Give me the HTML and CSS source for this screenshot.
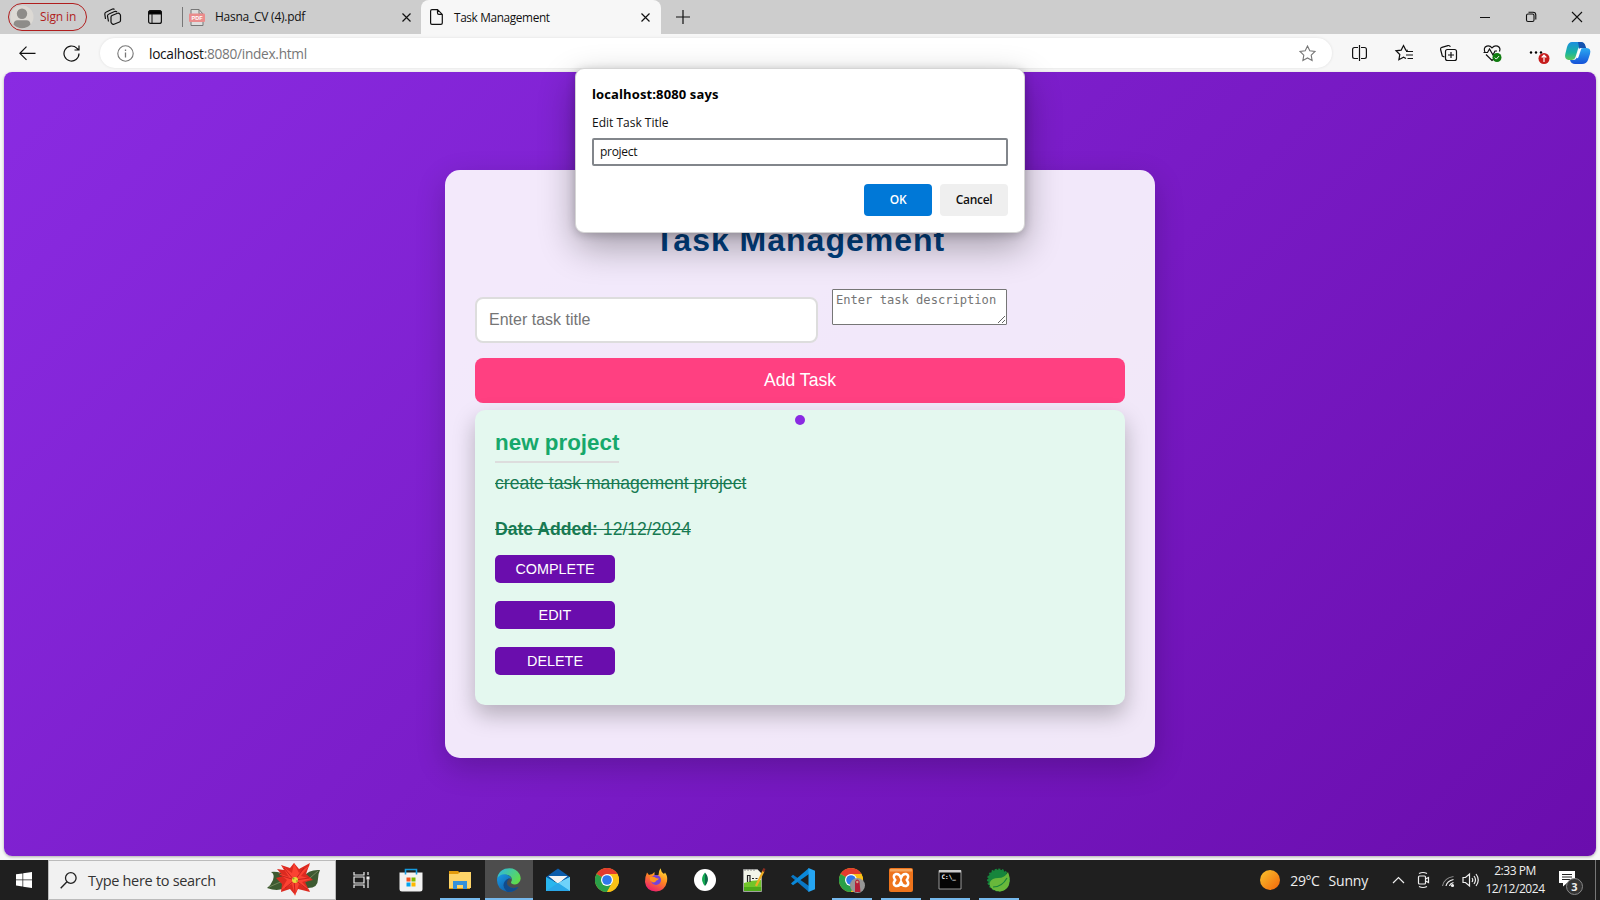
FILE: index.html
```html
<!DOCTYPE html>
<html lang="en">
<head>
<meta charset="utf-8">
<title>Task Management</title>
<link rel="stylesheet" href="styles.css">
</head>
<body>
<svg width="0" height="0" class="defs">
  <defs>
    <linearGradient id="edgeBlue" x1="0" y1="0" x2="1" y2="1"><stop offset="0" stop-color="#1a9be6"/><stop offset="1" stop-color="#0c4a94"/></linearGradient>
    <linearGradient id="edgeGreen" x1="0" y1="0" x2="1" y2=".6"><stop offset="0" stop-color="#2bb5ea"/><stop offset="1" stop-color="#5fdc4c"/></linearGradient>
    <linearGradient id="fox" x1=".8" y1="0" x2=".3" y2="1"><stop offset="0" stop-color="#ffe43b"/><stop offset=".45" stop-color="#ff8a1f"/><stop offset="1" stop-color="#ed1b70"/></linearGradient>
    <linearGradient id="sun" x1="0" y1="0" x2="1" y2="1"><stop offset="0" stop-color="#f9c42d"/><stop offset="1" stop-color="#f3650a"/></linearGradient>
    <linearGradient id="pilotL" x1="0" y1="0" x2="0" y2="1"><stop offset="0" stop-color="#1c8fe0"/><stop offset=".6" stop-color="#19b59f"/><stop offset="1" stop-color="#5cc85a"/></linearGradient>
    <linearGradient id="pilotR" x1="0" y1="0" x2="0" y2="1"><stop offset="0" stop-color="#2aa9f2"/><stop offset="1" stop-color="#1652d8"/></linearGradient>
    <g id="chrome">
      <circle cx="12" cy="12" r="12" fill="#fbc116"/>
      <path d="M12 12 1.6 6A12 12 0 0 1 22.4 6Z" fill="#e33b2e"/>
      <path d="M1.6 6A12 12 0 0 0 12 24l5-9-5-3Z" fill="#2a9f48"/>
      <path d="M12 6h10.4A12 12 0 0 1 12 24l5.2-9Z" fill="#fbc116"/>
      <circle cx="12" cy="12" r="6" fill="#fff"/><circle cx="12" cy="12" r="4.8" fill="#2f78ec"/>
    </g>
  </defs>
</svg>
<div class="screen">
  <header class="tabs">
    <div class="signin">
      <svg width="24" height="24" viewBox="0 0 24 24"><circle cx="12" cy="12" r="11.5" fill="#dcd9d4"/><circle cx="12" cy="8.7" r="5.2" fill="#8e8c89"/><path d="M3.5 19.5q.5-4.200 4-4.200h9q3.500 0 4 4.200A11.500 11.500 0 0 1 3.500 19.500Z" fill="#8e8c89"/></svg>
      <span class="t-sign">Sign in</span>
    </div>
    <svg class="i-work" width="18" height="18" viewBox="0 0 18 18"><path d="M1.500 11 .8 6q0-1.500 1.500-2L8 1.200q1.500-.6 2.500.3M4.500 13.500 3.500 8q0-1.500 1.500-2l5.500-2.500q1.500-.5 2.500.5M7 9q0-1 1-1.500l5.500-2.200q1.300-.5 2.200.5.800.8.800 1.700v5q0 1-1 1.500L10 16.200q-1.200.5-2.100-.500Q7 14.800 7 14Z" fill="none" stroke="#111" stroke-width="1.200"/></svg>
    <svg class="i-vert" width="14" height="14" viewBox="0 0 14 14"><rect x=".6" y=".6" width="12.800" height="12.800" rx="2" fill="none" stroke="#111" stroke-width="1.200"/><path d="M1 1h12v3H1zM4 4v9" stroke="#111"/></svg>
    <div class="sep"></div>
    <div class="tab">
      <svg width="16" height="17" viewBox="0 0 16 17"><path d="M2 .500h8L14 5v11.500H2Z" fill="#ddd" stroke="#777"/><path d="M10 .500V5h4" fill="none" stroke="#777"/><rect x="0" y="4.500" width="16" height="8.500" rx="1" fill="#ea8c8c"/><text x="8" y="11" text-anchor="middle" class="pdf">PDF</text></svg>
      <span class="t-cv">Hasna_CV (4).pdf</span>
      <svg class="x" width="9" height="9" viewBox="0 0 9 9"><path d="m.5.5 8 8m0-8-8 8" stroke="#111" stroke-width="1.200"/></svg>
    </div>
    <div class="tab active">
      <svg width="13" height="16" viewBox="0 0 13 16"><path d="M2 .6h5.500l4.800 4.800V14q0 1.400-1.400 1.400H2Q.6 15.400.6 14V2Q.6.600 2 .600ZM7.500.6V4q0 1.400 1.400 1.400h3.400" fill="none" stroke="#111" stroke-width="1.200"/></svg>
      <span class="t-task">Task Management</span>
      <svg class="x" width="9" height="9" viewBox="0 0 9 9"><path d="m.5.5 8 8m0-8-8 8" stroke="#111" stroke-width="1.200"/></svg>
    </div>
    <svg class="plus" width="14" height="14" viewBox="0 0 14 14"><path d="M7 0v14M0 7h14" stroke="#111" stroke-width="1.200"/></svg>
    <svg class="win" width="104" height="12" viewBox="0 0 104 12"><path d="M0 6.500h10" stroke="#111"/><g fill="none" stroke="#111" stroke-width="1.100"><rect x="46.500" y="3" width="7.500" height="7.500" rx="1.500"/><path d="M48.500 1.200h4.500q2.800 0 2.800 2.800v4.500"/><path d="m92 1 10 10m0-10-10 10"/></g></svg>
  </header>
  <div class="toolbar">
    <svg class="back" width="17" height="15" viewBox="0 0 17 15"><path d="M7.500.700.900 7.300l6.600 6.600M1 7.300h15.500" fill="none" stroke="#111" stroke-width="1.200"/></svg>
    <svg class="reload" width="17" height="17" viewBox="0 0 17 17"><path d="M16 8.500A7.500 7.500 0 1 1 13.800 3.200L16 5M16 .500V5h-4.500" fill="none" stroke="#111" stroke-width="1.200"/></svg>
    <div class="address">
      <svg width="17" height="17" viewBox="0 0 17 17"><circle cx="8.500" cy="8.500" r="7.700" fill="none" stroke="#777" stroke-width="1.100"/><path d="M8.500 7.500v5M8.500 4.500v1.500" stroke="#777" stroke-width="1.300"/></svg>
      <span class="t-url"><b>localhost</b>:8080/index.html</span>
      <svg class="star" width="17" height="17" viewBox="0 0 17 17"><path d="m8.500 1 2.300 4.800 5.200.700-3.800 3.700.9 5.200-4.600-2.500-4.600 2.500.9-5.200L1 6.500l5.200-.7Z" fill="none" stroke="#777" stroke-width="1.100"/></svg>
    </div>
    <svg class="tools" width="244" height="28" viewBox="0 0 244 28">
      <g fill="none" stroke="#111" stroke-width="1.200">
        <path d="M6 7.500H2.500Q.6 7.500.6 9.400v7.200q0 1.900 1.900 1.900H6M9 7.500h3.500q1.900 0 1.900 1.900v7.200q0 1.900-1.900 1.900H9M7.500 5v16"/>
        <path d="M54 18.500l-2.500-1.300-4.600 2.500.9-5.200L44 10.800l5.200-.7L51.500 5.500l2.300 4.600 2 .3M54 11.500h7M54 15h7M55.500 18.500h5.500"/>
        <path d="M92.500 17l-2.200-1-1.700-6.500q-.3-1.700 1.300-2.200l6-1.700q1.900-.5 2.400 1.300"/><rect x="93.500" y="9.500" width="11" height="11" rx="2"/><path d="M99 12v6M96 15h6"/>
        <path d="M143 18l-3 2.500-6-6M133 12.500q-2-5 1.800-6.400 3-1 5.200 1.700 2.400-2.700 5.500-1.700 3.500 1.500 2 5.400M131.500 12.500h4l2-3.500 3.500 6 2-4h2"/>
      </g>
      <circle cx="145" cy="17.500" r="4.500" fill="#107c10"/><path d="m142.800 17.600 1.500 1.500 2.700-3" fill="none" stroke="#fff"/>
      <circle cx="179" cy="12.500" r="1.200"/><circle cx="184" cy="12.500" r="1.200"/><circle cx="189" cy="12.500" r="1.200"/>
      <circle cx="192" cy="18.500" r="5.500" fill="#c61c1c"/><path d="M192 22v-6.500m-2.300 2 2.300-2.300 2.300 2.300" fill="none" stroke="#fff" stroke-width="1.200"/>
      <path d="M220 2h8q4 0 5 4h-4q-2 0-3 3l-2.500 8q-1 3-4 3h-3q-4.500-1-3.200-6L215 7q1.500-5 5-5Z" fill="url(#pilotL)"/>
      <path d="M226 2h3q3.500 0 4.500 4l.8 2.500-3.800-.5q-2 0-3 2Z" fill="#1553b0"/>
      <path d="M230 24h-7q-4 0-5-4h3.500q2.500 0 3.500-3l2.500-6q1-3 4-3h3q5 0 3.500 6l-2 6q-1.500 4-6 4Z" fill="url(#pilotR)"/>
      <path d="m224.300 17.500 2.800-8.500q.6-1 2.400-1l-3 9q-.7 2-2.200.500Z" fill="#fff"/>
    </svg>
  </div>
  <main class="viewport">
    <section class="card">
      <h1><span>T</span>ask Management</h1>
      <div class="fields">
        <input class="title" type="text" placeholder="Enter task title">
        <textarea class="desc" placeholder="Enter task description"></textarea>
      </div>
      <button class="add">Add Task</button>
      <article class="task">
        <span class="dot"></span>
        <h3>new project</h3>
        <p class="what">create task management project</p>
        <p class="date"><strong>Date Added:</strong> 12/12/2024</p>
        <div class="actions"><button>COMPLETE</button><button>EDIT</button><button>DELETE</button></div>
      </article>
    </section>
  </main>
  <footer class="taskbar">
    <div class="start"><svg width="16" height="16" viewBox="0 0 16 16"><path d="M0 2.300 6.500 1.400v6.200H0zM7.200 1.300 16 0v7.600H7.200zM0 8.300h6.500v6.200L0 13.600zM7.200 8.300H16V16l-8.800-1.300z" fill="#fff"/></svg></div>
    <div class="search">
      <svg width="17" height="17" viewBox="0 0 17 17"><circle cx="10.800" cy="6" r="5.300" fill="none" stroke="#222" stroke-width="1.300"/><path d="M7 9.800.7 16.200" stroke="#222" stroke-width="1.400"/></svg>
      <span class="t-search">Type here to search</span>
      <svg class="flower" width="54" height="36" viewBox="0 0 54 36">
        <path d="M0 26q4-3 6-8 2-6-2-8 9-1 15 4l2 9q-7 8-21 3ZM53 8q-11-1-17 7l3 11q12 1 12-9 0-5 2-9Z" fill="#3d5a30"/><path d="m2 25 16-7M51 9 36 22" stroke="#72855a" fill="none"/>
        <path d="m14 3 9 3 4-5 5 6 11-6-4 11 7 6-8 2 5 10-12-3-3 6-5-6-9 3 1-8-6-6 7-2-6-7 7 1Z" fill="#dc2a20"/>
        <path d="m15 4 7 11-11-4 9 7-6 10 11-6 3 12 4-12 11 7-8-9 9-3-10-3 9-11-11 8-5-10-2 10Z" fill="#fb4232"/>
        <path d="m27 18-10-12m10 12 1 13m0-13-16-5m16 5 14-2m-14 2 12 9m-12-9 9-12m-9 12-10 8" stroke="#b9191a" stroke-width=".8"/>
        <circle cx="28" cy="18" r="3" fill="#ead83a"/><circle cx="26.500" cy="16.500" r="1" fill="#8ba32e"/><circle cx="30" cy="19" r="1" fill="#a8a02a"/>
      </svg>
    </div>
    <div class="apps">
      <div class="app"><svg width="18" height="16" viewBox="0 0 18 16" fill="none" stroke="#eee" stroke-width="1.200"><path d="M1 0v3h10V0M1 16v-3h10v3M1 5h10v6H1zM15 0v3M15 7.500V16"/><path d="M13.500 4.500h3v3h-3z" fill="#eee" stroke="none"/></svg></div>
      <div class="app"><svg width="24" height="24" viewBox="0 0 24 24"><path d="M.5 4.500h23V21q0 2.500-2.500 2.500H3Q.5 23.500.5 21Z" fill="#f2f2f2"/><path d="M6.500 6.500V1.500h11v5" fill="none" stroke="#159be0" stroke-width="1.600"/><path d="M7.500 9.500h4v4h-4z" fill="#f25022"/><path d="M12.500 9.500h4v4h-4z" fill="#7fba00"/><path d="M7.500 14.500h4v4h-4z" fill="#00a4ef"/><path d="M12.500 14.500h4v4h-4z" fill="#ffb900"/></svg></div>
      <div class="app open"><svg width="24" height="24" viewBox="0 0 24 24"><path d="M1 3h9l2 2h10v16H1Z" fill="#e29b0c"/><path d="M1 6h9l2-2h11v16H1Z" fill="#fdd468"/><path d="M5 21v-8h14v8h-4v-4H9v4Z" fill="#3591d9"/></svg></div>
      <div class="app open current"><svg width="24" height="24" viewBox="0 0 24 24"><path d="M.2 10Q1.500 3 8 .8 18-1.500 22.500 6q3 6-1.500 9.500-3.500 2-6.500 0-1-.8.100-2.500 1-3-1.600-5Q8 4.500.2 10Z" fill="url(#edgeGreen)"/><path d="M.2 10Q4 5 9.500 6.500q4.500 1.500 5 5-1-1.500-3-1-3.500 2-1.500 6 3.500 5.500 11.500 2.500Q17 25 10 23.800 0 21.500 0 12Z" fill="url(#edgeBlue)"/><path d="M10 23.800Q4 18.500 8 13q2-3 5-2.500-4.500 2.500-2.500 6.500 3.500 5 11 2-4.500 5.500-11.500 4.800Z" fill="#124c8c"/></svg></div>
      <div class="app"><svg width="24" height="24" viewBox="0 0 24 24"><path d="M0 9 12 .5 24 9v4H0Z" fill="#0b5cab"/><path d="M3 8h18l-9 8Z" fill="#f4f4f4"/><path d="M0 9l12 6.500L24 9v14H0Z" fill="#29b6ee"/><path d="M2.500 8h19L12 15Z" fill="#f4f4f4"/><path d="m12 15 12-6v14Z" fill="#6fd2fa"/><path d="m12 15 12 8H0Z" fill="#2aa7e8"/></svg></div>
      <div class="app"><svg width="24" height="24" viewBox="0 0 24 24"><use href="#chrome"/></svg></div>
      <div class="app"><svg width="24" height="24" viewBox="0 0 24 24"><path d="M3 4.500 5 7q1.500-1 3-.8L10.500 4v3l4 0q0-4 2-6.800Q17 4 20 6l1-1.500q3 4 2 9-2 9.500-11 10Q2 23 1 14q-.2-5 2-9.500Z" fill="url(#fox)"/><circle cx="12" cy="12" r="5" fill="#7443db"/><path d="M6 9q4-1 6 1 2 .500 3 .500-1 2-3 2.200 0 2-3 1.800Q5 13 6 9Z" fill="#ff951d"/></svg></div>
      <div class="app"><svg width="24" height="24" viewBox="0 0 24 24"><circle cx="12" cy="12" r="11" fill="#fff"/><path d="M12 4.500q-3.600 4-2.800 8.500.8 3 2.800 5Z" fill="#13aa52"/><path d="M12 4.500q3.600 4 2.800 8.500-.8 3-2.800 5V19.500Z" fill="#0b6947"/></svg></div>
      <div class="app"><svg width="24" height="24" viewBox="0 0 24 24"><path d="M1.500 1.500h14l4 4v18h-18Z" fill="#f2f5e9" stroke="#aaa" stroke-width=".7"/><path d="M2 15q8-3 17.200-3v11H2Z" fill="#72c52a"/><path d="M2 19h17.200v4H2z" fill="#4eaa19"/><path d="M5.500 14V7.500H8V14M10 10.500h2m1.500 0h2" fill="none" stroke="#222" stroke-width="1.200"/><path d="m14 18 7.500-15" stroke="#f0ad24" stroke-width="2.300"/><path d="m21 3.500 1.500-3" stroke="#8c2d20" stroke-width="2.300"/><path d="M3 1v2m3-2v2m3-2v2m3-2v2" stroke="#888"/></svg></div>
      <div class="app"><svg width="24" height="24" viewBox="0 0 24 24"><path d="m0 8.500 2-1.800L18 18v6L1 9.500Z" fill="#0a77c4"/><path d="m0 15.500 2 1.800L18 6V0L1 14.500Z" fill="#0a89da"/><path d="m17.500 0 6.500 2.800v18.400L17.500 24Z" fill="#25a5f2"/></svg></div>
      <div class="app open"><svg width="26" height="26" viewBox="0 0 26 26"><use href="#chrome" x="0" y="1"/><circle cx="18.500" cy="18.500" r="7.500" fill="#969696"/><path d="M16 25V14.500q2.200-4 4.500 0l1 10.500Z" fill="#b51f36"/><circle cx="18.300" cy="15" r="1.200" fill="#d1a387"/></svg></div>
      <div class="app open"><svg width="24" height="24" viewBox="0 0 24 24"><rect width="24" height="24" rx="2" fill="#ee741c"/><path d="M1 1h22v2.500H1z" fill="#f5a45c"/><path d="M12 10Q10.500 5.500 7 6q-4 1.500-.8 6-3.200 4.500.8 6 3.500.5 5-4 1.500 4.500 5 4 4-1.500.8-6 3.200-4.500-.8-6-3.500-.5-5 4Z" fill="none" stroke="#fff" stroke-width="2.500"/></svg></div>
      <div class="app open"><svg width="24" height="24" viewBox="0 0 24 24"><path d="M1 2.500h22v18.500H1Z" fill="#050505" stroke="#999"/><path d="M1 2h22v2.500H1z" fill="#ccc"/><text x="3.500" y="10.500" class="cmd">C:\_</text></svg></div>
      <div class="app open"><svg width="24" height="24" viewBox="0 0 24 24"><circle cx="11.500" cy="12" r="10.500" fill="#16853c" stroke="#16853c" stroke-width="2" stroke-dasharray="2 1.500"/><path d="M21 4q3 7 .5 14-4 7-12 5Q1 20 3 14q2-4 8-4 7 0 10-6Z" fill="#69b83b"/><path d="M6 19q9 0 14-9" fill="none" stroke="#16853c" stroke-width="1.200"/></svg></div>
    </div>
    <div class="tray">
      <svg class="sun" width="20" height="20" viewBox="0 0 20 20"><circle cx="10" cy="10" r="10" fill="url(#sun)"/></svg>
      <span class="t-temp">29°C</span><span class="t-sunny">Sunny</span>
      <svg class="trayicons" width="88" height="18" viewBox="0 0 88 18" fill="none" stroke="#eee" stroke-width="1.200">
        <path d="m1 12 5.500-5.500L12 12"/>
        <rect x="26.500" y="5" width="7" height="8" rx="1"/><path d="m33.500 8 3-1.500v5l-3-1.500M27 2.500q4-2 8 0M27 15.500q4 2 8 0"/>
        <path d="M50.500 15Q52 7 61.500 5.500" stroke="#888"/><path d="M54 15q1-5 7.500-6.500M57.500 15q.5-2.500 4-3.500"/><circle cx="60.500" cy="14.500" r="1" fill="#eee"/>
        <path d="M71 6.500h2.500L77.500 3v12l-4-3.500H71Zm9 .5q1.500 2 0 4m2-6q3 4 0 8m2-10q4.500 6 0 12"/>
      </svg>
      <div class="clock"><span class="t-time">2:33 PM</span><span class="t-date">12/12/2024</span></div>
      <svg class="note" width="26" height="25" viewBox="0 0 26 25"><path d="M1 1h16v12H9l-4 3.500V13H1Z" fill="#fff"/><path d="M4 4.500h10M4 7h10M4 9.500h8" stroke="#222"/><circle cx="16.500" cy="16.500" r="8" fill="#333" stroke="#888"/><text x="16.500" y="20.500" text-anchor="middle" class="badge">3</text></svg>
      <div class="peek"></div>
    </div>
  </footer>
  <div class="dialog">
    <h2><span>localhost:8080 says</span></h2>
    <p><span>Edit Task Title</span></p>
    <div class="prompt"><span>project</span></div>
    <div class="buttons"><button class="ok">OK</button><button class="cancel">Cancel</button></div>
  </div>
</div>
</body>
</html>
```
FILE: styles.css
```css
* { box-sizing: border-box; }
body { margin: 0; font-family: "Liberation Sans", Arial, sans-serif; }
svg { display: block; flex: none; }
.defs { position: absolute; }
.screen { position: relative; width: 1600px; height: 900px; background: #f7f7f7; display: flex; flex-direction: column; overflow: hidden; }
.tabs, .toolbar, .taskbar, .dialog { font-family: "Open Sans", "Noto Sans", sans-serif; }
.tabs span, .toolbar span, .taskbar span { white-space: nowrap; }

.tabs { height: 34px; background: #cdcdcd; display: flex; align-items: center; font-size: 12px; color: #111; }
.tabs span { padding-bottom: 1px; }
.signin { width: 79px; height: 28px; margin: 0 0 0 8px; border: 1px solid #b01e1e; border-radius: 14px; display: flex; align-items: center; gap: 6px; padding-left: 1px; color: #b01e1e; }
.t-sign { letter-spacing: -.1px; }
.i-work { margin-left: 17px; }
.i-vert { margin-left: 26px; }
.sep { width: 1px; height: 20px; background: #777; margin-left: 20px; }
.tab { display: flex; align-items: center; height: 34px; width: 238px; padding: 0 10px 0 6px; }
.tab span { margin-left: 10px; }
.tab .x { margin-left: auto; }
.t-cv { letter-spacing: -.25px; }
.t-task { font-size: 11.800px; letter-spacing: -.35px; }
.tab.active { width: 240px; background: #f7f7f7; border-radius: 8px 8px 0 0; padding: 0 11px 0 9px; }
.tab.active span { margin-left: 11px; }
.plus { margin-left: 15px; }
.win { margin-left: auto; margin-right: 16px; }
.pdf { font: bold 5.500px "Liberation Sans", sans-serif; fill: #fff; }

.toolbar { height: 38px; display: flex; align-items: center; }
.back { margin-left: 19px; }
.reload { margin-left: 27px; }
.address { width: 1232px; height: 30px; margin-left: 20px; background: #fff; border-radius: 15px; box-shadow: 0 0 3px rgba(0,0,0,.1); display: flex; align-items: center; padding: 0 16px 0 17px; }
.t-url { margin-left: 15px; font-size: 13.700px; letter-spacing: -.3px; color: #777; }
.t-url b { font-weight: 400; color: #111; }
.star { margin-left: auto; }
.tools { margin-left: 20px; margin-top: 2px; }

.viewport { width: 1592px; height: 784px; margin-left: 4px; border-radius: 8px; background: linear-gradient(135deg, #8a2be2, #6a0dad); display: flex; align-items: center; justify-content: center; box-shadow: 0 1px 3px rgba(0,0,0,.3); }
.card { width: 710px; height: 588px; padding: 47px 30px 30px; border-radius: 15px; background: rgba(255,255,255,.9); box-shadow: 0 10px 30px rgba(0,0,0,.2); }
h1 { margin: 0; height: 46px; line-height: 46px; font-size: 32px; letter-spacing: 1px; color: #004080; text-align: center; }
h1 span { letter-spacing: -1px; }
.fields { display: flex; align-items: flex-start; gap: 14px; margin-top: 26px; }
.title { width: 343px; height: 46px; margin-top: 8px; border: 2px solid #ddd; border-radius: 8px; padding: 0 12px; font: 16px "Liberation Sans", Arial, sans-serif; background: #fff; }
.title::placeholder, .desc::placeholder { color: #757575; }
.desc { width: 175px; height: 36px; padding: 3px 2px 2px 3px; border: 1px solid #767676; border-radius: 1px; font: 12.100px/15px "DejaVu Sans Mono", monospace; overflow: hidden; }
.add { display: block; width: 650px; height: 45px; margin-top: 15px; border: 0; border-radius: 8px; background: #ff4081; color: #fff; font: 17.600px "Liberation Sans", Arial, sans-serif; }
.task { position: relative; height: 295px; margin-top: 7px; padding: 20px; border-radius: 10px; background: #e4f8ef; box-shadow: 0 10px 22px rgba(0,0,0,.25); color: #177a52; font-size: 17.600px; }
.dot { position: absolute; top: 5px; left: 320px; width: 10px; height: 10px; border-radius: 50%; background: #8a2be2; }
h3 { width: max-content; height: 33px; margin: 0; line-height: 25px; font-size: 22.400px; color: #17a86b; border-bottom: 2px solid #ddd; }
.task p { margin: 0; line-height: 20px; text-decoration: line-through; }
.what { padding-top: 10px; }
.date { padding-top: 26px; }
.actions { display: flex; flex-direction: column; gap: 18px; margin-top: 16px; }
.actions button { width: 120px; height: 28px; padding: 0; border: 0; border-radius: 5px; background: #6a0dad; color: #fff; font: 14.400px "Liberation Sans", Arial, sans-serif; }

.dialog { position: absolute; left: 575px; top: 68px; width: 450px; height: 165px; padding: 16px 17px; background: #fff; border: 1px solid #d5d5d5; border-radius: 9px; box-shadow: 0 14px 36px rgba(0,0,0,.32), 0 2px 10px rgba(0,0,0,.2); color: #111; font-size: 12px; }
.dialog > * { margin-left: -1px; margin-right: -1px; }
.dialog h2 { margin-top: 0; margin-bottom: 0; font-size: 13px; font-weight: 700; line-height: 18px; letter-spacing: .12px; color: #000; }
.dialog p { margin-top: 11px; margin-bottom: 0; line-height: 18px; }
.prompt { height: 28px; margin-top: 6px; border: 2px solid #82868b; border-radius: 2px; padding-left: 6px; line-height: 23px; letter-spacing: -.3px; }
.buttons { display: flex; justify-content: flex-end; gap: 8px; margin-top: 18px; }
.buttons button { width: 68px; height: 32px; padding: 0 0 2px; border: 0; border-radius: 4px; font: 600 12px "Open Sans", sans-serif; letter-spacing: -.3px; }
.ok { background: #0078d7; color: #fff; }
.cancel { background: #efefef; color: #111; }

.taskbar { height: 40px; margin-top: 4px; background: #1f1f1f; display: flex; color: #eee; }
.start { width: 48px; display: flex; align-items: center; justify-content: center; }
.search { width: 288px; background: #f1f1f1; border: 1px solid #bbb; display: flex; align-items: center; padding-left: 11px; color: #333; }
.t-search { margin-left: 11px; font-size: 14.500px; letter-spacing: -.3px; }
.flower { margin-left: auto; margin-right: 14px; }
.apps { display: flex; gap: 1px; margin-left: 2px; }
.app { width: 48px; display: flex; align-items: center; justify-content: center; }
.app.open { background: linear-gradient(#76b9ed, #76b9ed) 50% 100% / 40px 2px no-repeat; }
.app.current { background: linear-gradient(#76b9ed, #76b9ed) 50% 100% / 100% 2px no-repeat, #4d4d4d; }
.tray { margin-left: auto; display: flex; align-items: center; font-size: 14px; }
.t-temp { margin-left: 10px; letter-spacing: -.4px; }
.t-sunny { margin-left: 9px; letter-spacing: -.2px; }
.trayicons { margin-left: 24px; }
.clock { width: 60px; margin-left: 5px; display: flex; flex-direction: column; align-items: center; font-size: 12px; line-height: 18px; letter-spacing: -.45px; }
.note { margin-left: 13px; margin-top: 4px; }
.badge { font: bold 11px "Open Sans", sans-serif; fill: #eee; }
.cmd { font: bold 6px "DejaVu Sans Mono", monospace; fill: #fff; }
.peek { width: 1px; height: 40px; background: #777; margin: 0 4px 0 11px; }
```
